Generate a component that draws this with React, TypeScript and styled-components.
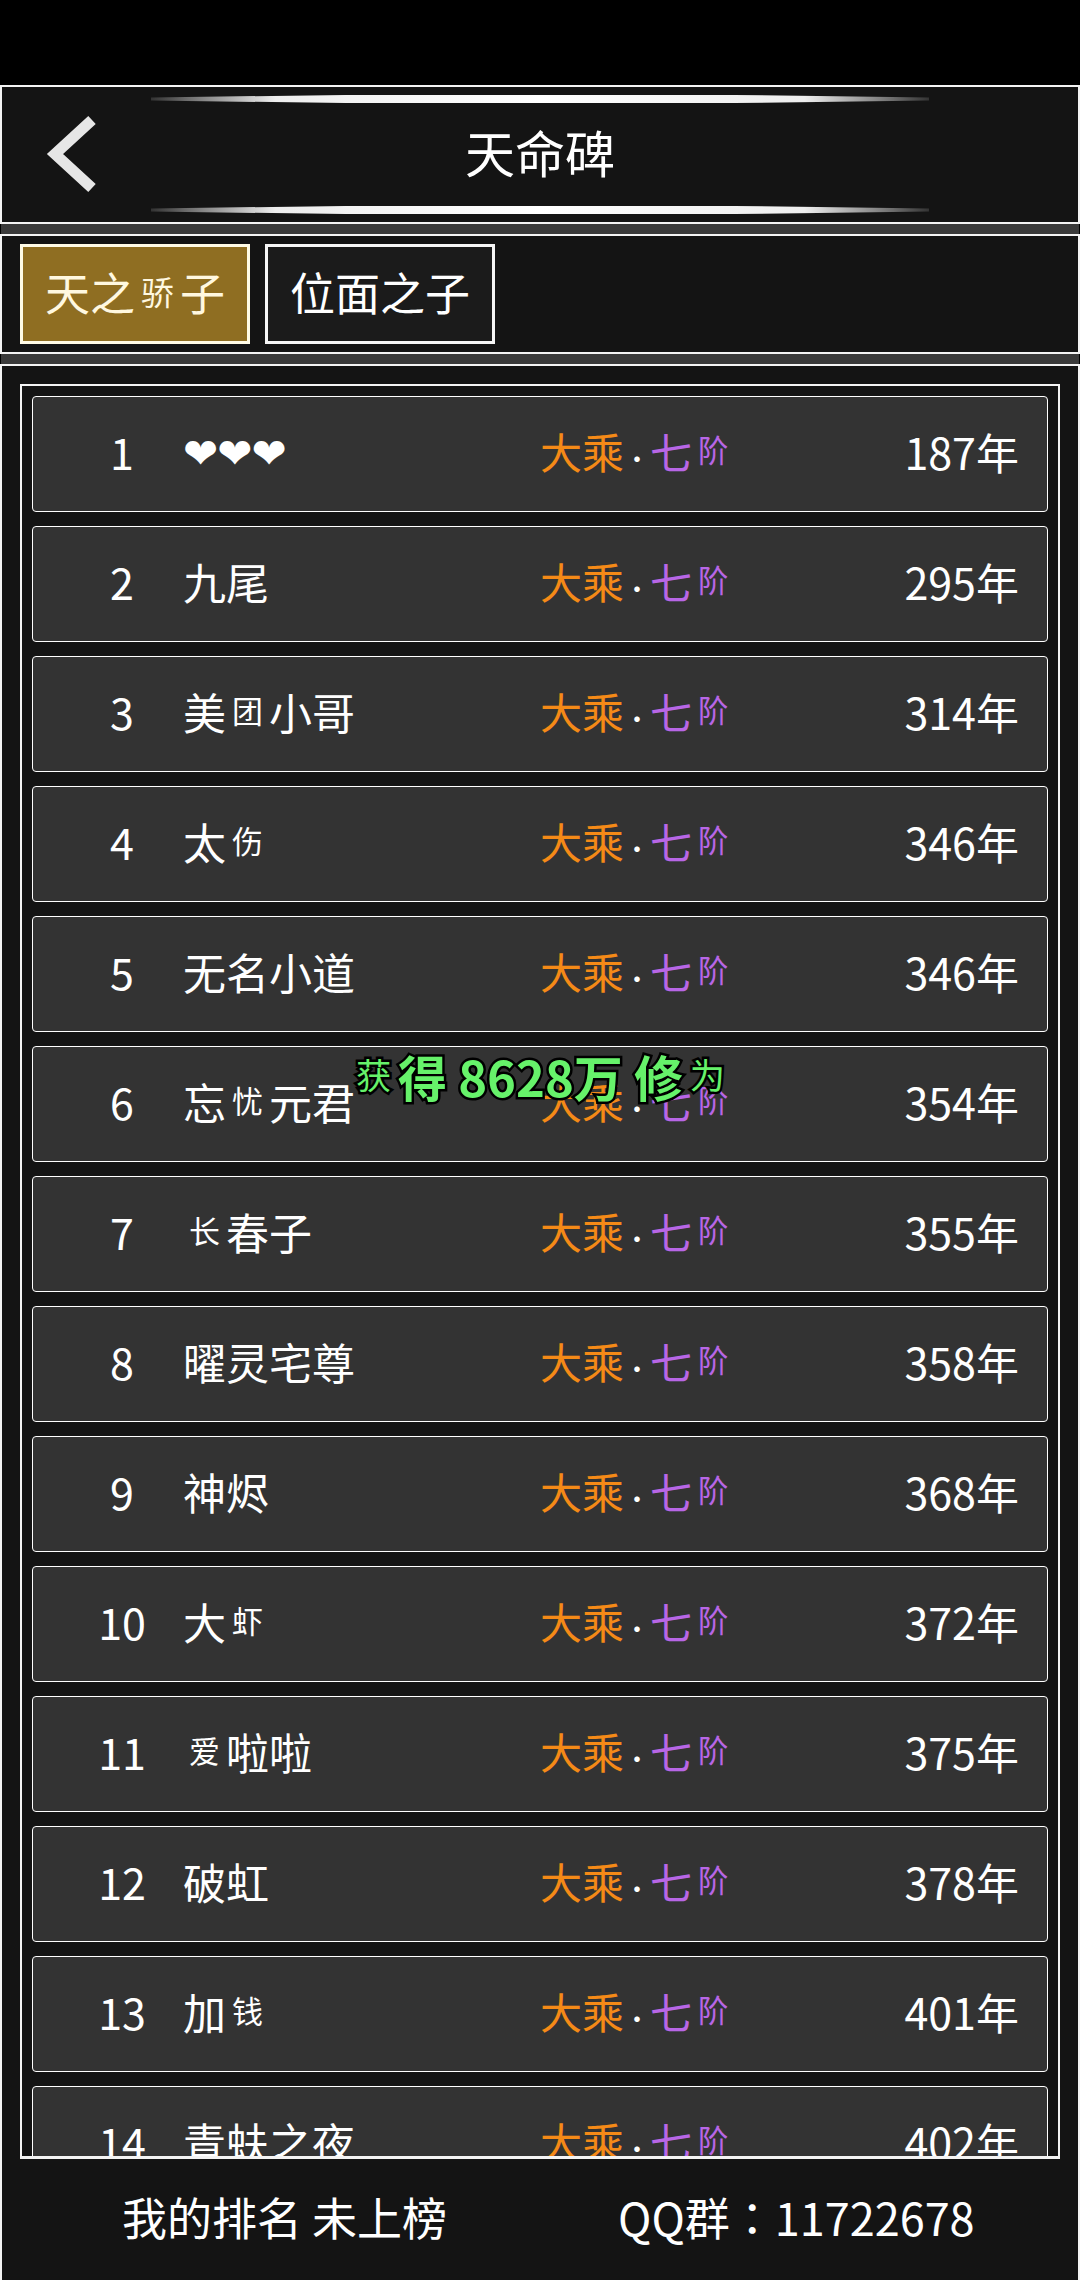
import React from "react";
import styled, { createGlobalStyle } from "styled-components";

const Global = createGlobalStyle`
  html, body { margin: 0; padding: 0; background: #000; }
  * { box-sizing: border-box; }
`;

const Page = styled.div`
  width: 1080px;
  height: 2280px;
  padding-top: 85px;
  background: #000;
  overflow: hidden;
  position: relative;
  display: flex;
  flex-direction: column;
  color: #fff;
  font-family: "Noto Sans CJK SC", "Noto Sans", sans-serif;
`;

const Header = styled.header`
  flex: none;
  height: 139px;
  background: #141414;
  border: 2px solid #f4f4f4;
  display: grid;
  grid-template-columns: 149px 778px 1fr;
`;

const BackCell = styled.div`
  display: flex;
  align-items: center;
  padding: 0 0 1px 44px;
`;

const TitleCell = styled.div`
  display: flex;
  flex-direction: column;
  align-items: stretch;
  justify-content: space-between;
  padding: 8px 0;
`;

const Rule = styled.div`
  height: 8px;
  background: linear-gradient(90deg, #333 0%, #8a8a8a 7%, #eee 16%, #fff 50%, #eee 84%, #8a8a8a 93%, #333 100%);
  clip-path: polygon(0 30%, 25% 0, 75% 0, 100% 30%, 100% 70%, 75% 100%, 25% 100%, 0 70%);
`;

const Title = styled.h1`
  margin: 0 0 8px;
  font-size: 50px;
  font-weight: 400;
  line-height: 1;
  text-align: center;
`;

const Divider = styled.div`
  flex: none;
  height: 10px;
  margin: 0 1px;
  background: #3a3a3a;
`;

const TabsPanel = styled.nav`
  flex: none;
  height: 120px;
  background: #141414;
  border: 2px solid #f4f4f4;
  padding: 8px 18px;
  display: flex;
  gap: 15px;
`;

const Tab = styled.div<{ $active?: boolean }>`
  width: 230px;
  height: 100px;
  border: 3px solid ${(p) => (p.$active ? "#fffbe6" : "#f6f6f6")};
  background: ${(p) => (p.$active ? "#8f6e22" : "#1b1b1b")};
  color: ${(p) => (p.$active ? "#fff8e0" : "#fff")};
  font-size: 45px;
  line-height: 1;
  padding-bottom: 6px;
  display: flex;
  align-items: center;
  justify-content: center;
`;

const Rare = styled.span`
  display: inline-block;
  width: 1.39em;
  font-size: 0.72em;
  font-weight: 400;
  text-align: center;
  line-height: 1;
  vertical-align: 0.22em;
`;

const Content = styled.main`
  flex: 1;
  min-height: 0;
  background: #141414;
  border: 2px solid #f4f4f4;
  border-bottom: 0;
  padding-top: 18px;
  display: flex;
  flex-direction: column;
`;

const Frame = styled.div`
  flex: none;
  height: 1775px;
  margin: 0 18px;
  border: 2px solid #f4f4f4;
  border-bottom-width: 3px;
  padding: 10px 10px 0;
  overflow: hidden;
  display: flex;
  flex-direction: column;
  gap: 14px;
`;

const Row = styled.div`
  flex: 0 0 116px;
  background: #333;
  border: 1.5px solid #fff;
  border-radius: 4px;
  padding: 0 28px 6px 28px;
  display: grid;
  grid-template-columns: 122px 357px 1fr auto;
  align-items: center;
  font-size: 43px;
  line-height: 1;
`;

const Rank = styled.span`
  text-align: center;
`;

const Name = styled.span`
  white-space: nowrap;
`;

const Hearts = styled.span`
  font-family: "DejaVu Sans", sans-serif;
  font-size: 42px;
  letter-spacing: -1px;
`;

const Realm = styled.span`
  color: #f58a17;
  white-space: nowrap;
  font-size: 42px;
`;

const Dot = styled.span`
  color: #fff;
  font-size: 26px;
`;

const Tier = styled.span`
  color: #b866e6;
`;

const Time = styled.span`
  text-align: right;
`;

const Footer = styled.footer`
  flex: 1;
  display: flex;
  align-items: center;
  padding: 0 0 6px 120px;
  font-size: 45px;
  line-height: 1;
`;

const Mine = styled.span`
  width: 496px;
`;

const Colon = styled.span`
  font-family: "Noto Sans CJK TC", sans-serif;
`;

const Toast = styled.div`
  position: absolute;
  left: 349px;
  top: 1046px;
  font-size: 49px;
  line-height: 60px;
  white-space: nowrap;
  color: #66f26a;
  -webkit-text-stroke: 5px #000;
  paint-order: stroke fill;
  font-weight: 700;
`;

const Back = () => (
  <svg width="52" height="78" viewBox="0 0 52 78" fill="none">
    <path d="M46 5 L9 39 L46 73" stroke="#e6e6e6" strokeWidth="11" strokeLinejoin="miter" />
  </svg>
);

type Player = { name: React.ReactNode; time: string };

const players: Player[] = [
  { name: <Hearts>❤❤❤</Hearts>, time: "187年" },
  { name: "九尾", time: "295年" },
  { name: <>美<Rare>团</Rare>小哥</>, time: "314年" },
  { name: <>太<Rare>伤</Rare></>, time: "346年" },
  { name: "无名小道", time: "346年" },
  { name: <>忘<Rare>忧</Rare>元君</>, time: "354年" },
  { name: <><Rare>长</Rare>春子</>, time: "355年" },
  { name: "曜灵宅尊", time: "358年" },
  { name: "神烬", time: "368年" },
  { name: <>大<Rare>虾</Rare></>, time: "372年" },
  { name: <><Rare>爱</Rare>啦啦</>, time: "375年" },
  { name: "破虹", time: "378年" },
  { name: <>加<Rare>钱</Rare></>, time: "401年" },
  { name: "青蚨之夜", time: "402年" },
];

export default function App() {
  return (
    <Page>
      <Global />
      <Header>
        <BackCell><Back /></BackCell>
        <TitleCell>
          <Rule />
          <Title>天命碑</Title>
          <Rule />
        </TitleCell>
      </Header>
      <Divider />
      <TabsPanel>
        <Tab $active>天之<Rare>骄</Rare>子</Tab>
        <Tab>位面之子</Tab>
      </TabsPanel>
      <Divider />
      <Content>
        <Frame>
          {players.map((p, i) => (
            <Row key={i}>
              <Rank>{i + 1}</Rank>
              <Name>{p.name}</Name>
              <Realm>大乘<Dot>·</Dot><Tier>七<Rare>阶</Rare></Tier></Realm>
              <Time>{p.time}</Time>
            </Row>
          ))}
        </Frame>
        <Footer>
          <Mine>我的排名 未上榜</Mine>
          <span>QQ群<Colon>：</Colon>11722678</span>
        </Footer>
      </Content>
      <Toast><Rare>获</Rare>得 8628万 修<Rare>为</Rare></Toast>
    </Page>
  );
}
